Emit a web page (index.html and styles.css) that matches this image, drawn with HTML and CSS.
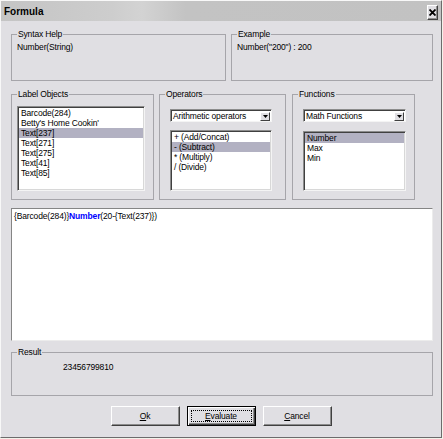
FILE: index.html
```html
<!DOCTYPE html>
<html>
<head>
<meta charset="utf-8">
<title>Formula</title>
<link rel="stylesheet" href="styles.css">
</head>
<body>
<div class="window">
  <div class="titlebar">
    <span class="title">Formula</span>
    <span class="close">
      <svg width="7" height="7" viewBox="0 0 7 7"><path d="M0.5 0.5 L6.5 6.5 M6.5 0.5 L0.5 6.5" stroke="#000" stroke-width="1.8"/></svg>
    </span>
  </div>
  <div class="content">
    <div class="row row-top">
      <fieldset class="group g-syntax"><legend>Syntax Help</legend><div class="gtext">Number(String)</div></fieldset>
      <fieldset class="group g-example"><legend>Example</legend><div class="gtext">Number("200") : 200</div></fieldset>
    </div>
    <div class="row row-mid">
      <fieldset class="group g-objects"><legend>Label Objects</legend>
        <ul class="listbox lb-objects">
          <li>Barcode(284)</li>
          <li>Betty's Home Cookin'</li>
          <li class="sel">Text[237]</li>
          <li>Text[271]</li>
          <li>Text[275]</li>
          <li>Text[41]</li>
          <li>Text[85]</li>
        </ul>
      </fieldset>
      <fieldset class="group g-ops"><legend>Operators</legend>
        <div class="combo"><span class="combo-text">Arithmetic operators</span><span class="combo-btn"><svg width="5" height="3" viewBox="0 0 5 3"><path d="M0 0 H5 L2.5 3 Z" fill="#000"/></svg></span></div>
        <ul class="listbox lb-ops">
          <li>+ (Add/Concat)</li>
          <li class="sel">- (Subtract)</li>
          <li>* (Multiply)</li>
          <li>/ (Divide)</li>
        </ul>
      </fieldset>
      <fieldset class="group g-funcs"><legend>Functions</legend>
        <div class="combo"><span class="combo-text">Math Functions</span><span class="combo-btn"><svg width="5" height="3" viewBox="0 0 5 3"><path d="M0 0 H5 L2.5 3 Z" fill="#000"/></svg></span></div>
        <ul class="listbox lb-funcs">
          <li class="sel">Number</li>
          <li>Max</li>
          <li>Min</li>
        </ul>
      </fieldset>
    </div>
    <div class="editor">{Barcode(284)}<span class="kw">Number</span>(20-{Text(237)})</div>
    <fieldset class="group g-result"><legend>Result</legend><div class="result">23456799810</div></fieldset>
    <div class="buttons">
      <div class="btn"><span class="btn-label"><u>O</u>k</span></div>
      <div class="btn btn-default"><span class="btn-label focus"><u>E</u>valuate</span></div>
      <div class="btn"><span class="btn-label"><u>C</u>ancel</span></div>
    </div>
  </div>
</div>
</body>
</html>
```

FILE: styles.css
```css
html, body {
  margin: 0;
  padding: 0;
}
body {
  background: #f3f2ea;
  font-family: "Liberation Sans", Arial, sans-serif;
  font-size: 8.5px;
  letter-spacing: -0.15px;
  color: #000;
}
.window {
  width: 442px;
  height: 438px;
  box-sizing: border-box;
  background: #e0dfe3;
  border: 1px solid;
  border-color: #f8f8f8 #6c6c6c #6c6c6c #f8f8f8;
  display: flex;
  flex-direction: column;
}
.titlebar {
  height: 20px;
  flex: none;
  display: flex;
  align-items: flex-start;
  justify-content: space-between;
  padding: 0 3px 0 3px;
  background: linear-gradient(to right, #c4c4c4 0%, #cdcdcd 25%, #d3d3d3 32%, #c3c3c3 42%, #c2c2c2 100%);
}
.title {
  margin-top: 5px;
  font-size: 10px;
  font-weight: bold;
  line-height: 12px;
  letter-spacing: 0;
}
.close {
  margin-top: 4px;
  width: 11px;
  height: 15px;
  box-sizing: border-box;
  background: #e0dfe3;
  border: 1px solid;
  border-color: #fff #404040 #404040 #fff;
  box-shadow: inset -1px -1px 0 #909090;
  display: flex;
  align-items: center;
  justify-content: center;
}
.close svg {
  display: block;
}
.content {
  flex: 1;
  display: flex;
  flex-direction: column;
  padding: 8px 8px 0 10px;
}
.row {
  display: flex;
  flex: none;
}
.group {
  margin: 0;
  box-sizing: border-box;
  border: 1px solid #a6a5aa;
  padding: 3px 5px 0 5px;
  min-width: 0;
  flex: none;
}
.group legend {
  padding: 0 1px;
  line-height: 10px;
  font-size: 8.5px;
}
.gtext {
  line-height: 10px;
  white-space: nowrap;
}
.g-syntax {
  width: 215px;
  height: 52px;
}
.g-example {
  width: 202px;
  height: 52px;
  margin-left: 5px;
}
.row-mid {
  margin-top: 8px;
}
.g-objects {
  width: 143px;
  height: 111px;
  padding-top: 7px;
}
.g-ops {
  width: 127px;
  height: 111px;
  margin-left: 5px;
  padding-top: 10px;
}
.g-funcs {
  width: 123px;
  height: 111px;
  margin-left: 6px;
  padding-top: 10px;
}
.listbox {
  list-style: none;
  margin: 0;
  padding: 0;
  background: #fff;
  box-sizing: border-box;
  border: 1px solid;
  border-color: #8c8c8c #f4f4f4 #f4f4f4 #8c8c8c;
  box-shadow: inset 1px 1px 0 #404040, inset -1px -1px 0 #d8d8d8;
  padding: 1px 1px 1px 1px;
  overflow: hidden;
}
.listbox li {
  height: 10px;
  line-height: 10px;
  padding-left: 2px;
  white-space: nowrap;
}
.listbox li.sel {
  background: #b2b1c2;
}
.lb-objects {
  width: 128px;
  height: 85px;
}
.combo {
  display: flex;
  align-items: center;
  justify-content: space-between;
  box-sizing: border-box;
  height: 13px;
  background: #fff;
  border: 1px solid;
  border-color: #8c8c8c #f4f4f4 #f4f4f4 #8c8c8c;
  box-shadow: inset 1px 1px 0 #404040;
  padding: 1px 1px 0 2px;
  margin-left: 5px;
}
.combo-text {
  line-height: 10px;
  white-space: nowrap;
}
.combo-btn {
  width: 10px;
  height: 9px;
  box-sizing: border-box;
  background: #e0dfe3;
  border: 1px solid;
  border-color: #fff #404040 #404040 #fff;
  display: flex;
  align-items: center;
  justify-content: center;
}
.combo-btn svg {
  display: block;
}
.g-ops .combo {
  width: 102px;
}
.g-funcs .combo {
  width: 103px;
}
.lb-ops {
  width: 102px;
  height: 61px;
  margin-top: 8px;
  margin-left: 5px;
}
.lb-funcs {
  width: 103px;
  height: 60px;
  margin-top: 9px;
  margin-left: 5px;
}
.editor {
  flex: none;
  margin-top: 8px;
  height: 133px;
  box-sizing: border-box;
  background: #fff;
  border: 1px solid;
  border-color: #858585 #ececec #ececec #858585;
  padding: 2px 2px;
  line-height: 10px;
  white-space: nowrap;
}
.kw {
  color: #0000ff;
  font-weight: bold;
}
.g-result {
  width: 100%;
  height: 49px;
  margin-top: 6px;
  padding-top: 5px;
}
.result {
  margin-left: 46px;
  line-height: 10px;
}
.buttons {
  flex: none;
  margin-top: 10px;
  display: flex;
  justify-content: center;
  gap: 7px;
  padding-right: 2px;
}
.btn {
  width: 69px;
  height: 20px;
  box-sizing: border-box;
  background: #e0dfe3;
  border: 1px solid;
  border-color: #fff #404040 #404040 #fff;
  box-shadow: inset -1px -1px 0 #8c8c8c;
  display: flex;
  align-items: center;
  justify-content: center;
}
.btn-default {
  border: 1px solid #000;
  box-shadow: inset 1px 1px 0 #fff, inset -1px -1px 0 #404040, inset -2px -2px 0 #8c8c8c;
  padding: 3px;
}
.btn-label {
  line-height: 10px;
  white-space: nowrap;
}
.btn-label.focus {
  flex: 1;
  align-self: stretch;
  display: flex;
  align-items: center;
  justify-content: center;
  border: 1px dotted #000;
}
.btn u {
  text-decoration: underline;
  text-underline-offset: 1px;
}
```
